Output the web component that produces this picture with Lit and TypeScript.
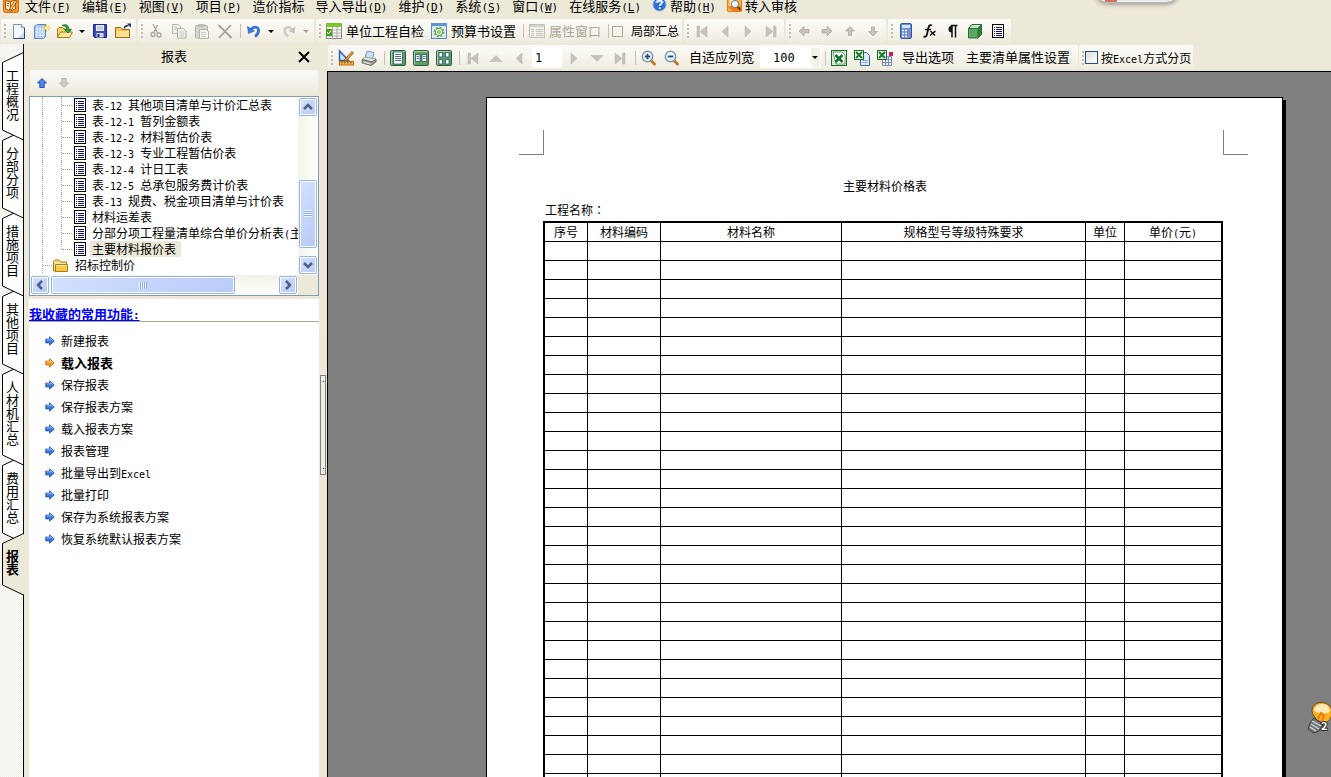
import { LitElement, html, css, svg, nothing } from "lit";
import { customElement, property, state } from "lit/decorators.js";
import { classMap } from "lit/directives/class-map.js";
import { styleMap } from "lit/directives/style-map.js";

/* Latin runs are set in a monospaced face, half as wide as a CJK glyph. */
const mixed = (text: string) =>
  text
    .split(/([\x20-\x7e]+)/)
    .filter((part) => part)
    .map((part) => (/^[\x20-\x7e]/.test(part) ? html`<span class="latin">${part}</span>` : part));

const magnifier = (plus: boolean) => svg`
  <path d="M9.5 10l4 4" stroke="#c77d20" stroke-width="3" stroke-linecap="round"/>
  <circle cx="6.5" cy="6.5" r="5.2" fill="#e3effb" stroke="#8296aa" stroke-width="1.400"/>
  <path d="M3 5.500a3.800 3.800 0 0 1 6.500-1.200" stroke="#fff" fill="none"/>
  <path d="M3.800 6.500h5.400" stroke="#2a4a78" stroke-width="1.800"/>
  ${plus ? svg`<path d="M6.500 3.800v5.400" stroke="#2a4a78" stroke-width="1.800"/>` : nothing}`;

const greenFrame = svg`
  <rect x=".5" y=".5" width="15" height="15" rx="1.500" fill="#5fa05f" stroke="#2b5f33"/>
  <path d="M1.500 14.500V1.500h13" stroke="#a9d8a4" fill="none"/>`;

const excelMark = (x: number, y: number) => svg`
  <rect x=${x + 0.5} y=${y + 0.5} width="9" height="9" fill="#e9f6e6" stroke="#1f6b2c"/>
  <path d=${`M${x + 2} ${y + 2}l6 6M${x + 8} ${y + 2}l-6 6`} stroke="#1c7a2f" stroke-width="2"/>`;

const sheetLines = svg`
  <rect x="2.500" y="1.500" width="11" height="13" fill="#fff" stroke="#000"/>
  <path d="M4 4h1M6 4h6M4 6h1M6 6h6M4 8h1M6 8h6M4 10h1M6 10h6M4 12h1M6 12h6" stroke="#0b0b8c" transform="translate(0 .5)"/>`;

const arrowRight = (fill: string, edge: string, light: string) => svg`
  <path d="M2.500 5.500h5v-3l6 5.500-6 5.500v-3h-5z" fill=${fill} stroke=${edge} stroke-width="1"/>
  <path d="M3.500 6.500h5v-2l3 3" stroke=${light} fill="none"/>`;

const grey = "#c6c4ba";

const ICONS: Record<string, unknown> = {
  app: svg`
    <rect x=".5" y=".5" width="15" height="15" rx="2" fill="#f39a21" stroke="#d56a10"/>
    <path d="M2.500 3.500l5 1.500 5-2.500v9.500l-5 2-5-2z" fill="#fff5dc" stroke="#b5520b"/>
    <path d="M7.500 5v8M3.800 6l2.400.700M3.800 8.500l2.400.700" stroke="#b5520b"/>
    <path d="M7 11l5-8 2 1.200-5 8-2.500 1z" fill="#fbd15a" stroke="#8b3f06" stroke-width=".8"/>`,
  help: svg`
    <circle cx="8" cy="8" r="7" fill="#2e6fd6" stroke="#9dbbe8"/>
    <path d="M3 6a5.500 5.500 0 0 1 10 0z" fill="#8fb9f4"/>
    <path d="M5.500 6.200c0-3.400 5-3.200 5-.400 0 1.800-2.300 1.800-2.300 3.700M8.200 11v1.800" stroke="#fff" stroke-width="1.800" fill="none"/>`,
  review: svg`
    <rect x=".5" y=".5" width="15" height="15" rx="1" fill="#f7b04a" stroke="#e0780f"/>
    <path d="M1 10l5 5h9V9z" fill="#f07d1a"/>
    <path d="M3 3h5v6H3z" fill="#fff3d8"/>
    <circle cx="8.500" cy="7.500" r="3.800" fill="#eef4f8" stroke="#8d8678" stroke-width="1.200"/>
    <path d="M11.300 10.500l3 3.200" stroke="#7b3b08" stroke-width="2"/>`,
  blank: svg`
    <path d="M2.500 1.500h8l3 3v11h-11z" fill="#f4f9ff" stroke="#7c92b4"/>
    <path d="M7 15l6-6v6z" fill="#c5d9f1"/>
    <path d="M13.500 5v10.500h-11" stroke="#2f4870" fill="none"/>
    <path d="M10.500 1.500v3h3" fill="#fff" stroke="#7c92b4"/>`,
  gridnew: svg`
    <path d="M.5 3.500l3-2h8v12l-2 2h-9z" fill="#9fc0ea" stroke="#5c86bf"/>
    <path d="M3 3v12M6 3v12M9 3v12M1 6h10M1 9h10M1 12h10" stroke="#e8f2ff"/>
    <path d="M12.500 1v8M8.500 5h8M9.800 2.200l5.400 5.400M15.200 2.200L9.800 7.600" stroke="#f2c234"/>
    <circle cx="12.500" cy="5" r="1.800" fill="#fff2a0"/>`,
  open: svg`
    <path d="M.5 14.500V6l1.500-1.500h3.500L7 6h5v3" fill="#f6d673" stroke="#a87c17"/>
    <path d="M.5 14.500L3.500 9h12l-3 5.500z" fill="#fce79a" stroke="#a87c17"/>
    <path d="M5 2.500c4-2 7 0 7 4h2.500L11 10 7.500 6.500H10c0-2-1.500-3.500-5-4z" fill="#35a83a" stroke="#14701d" stroke-width=".8"/>`,
  save: svg`
    <path d="M1.500 1.500h13v13h-12l-1-1z" fill="#3b49ba" stroke="#1e2780"/>
    <path d="M4 2h8v6H4z" fill="#eef2fb"/><path d="M5 4h6M5 6h6" stroke="#9aa6d8"/>
    <path d="M4.500 10h7v4.500h-7z" fill="#d8dcf0"/><path d="M5.500 11h2v3h-2z" fill="#1e2780"/>`,
  folderout: svg`
    <path d="M.5 14.500v-10h5l1.500 2h7.500v8z" fill="#f5c555" stroke="#99691a"/>
    <path d="M1.500 8h12.500v6H1.500z" fill="#fbdf8e"/>
    <path d="M9.500 5.500c0-2 1.500-3 4-3" stroke="#1d2d52" stroke-width="1.500" fill="none"/>
    <path d="M12 .5h4v4z" fill="#1d2d52"/>`,
  cut: svg`
    <path d="M5 1l4.500 9M9.500 2L6 9" stroke="#a9a79d" stroke-width="1.300"/>
    <circle cx="5" cy="11.500" r="2" fill="none" stroke="#a9a79d" stroke-width="1.300"/>
    <circle cx="11" cy="12" r="2" fill="none" stroke="#a9a79d" stroke-width="1.300"/>`,
  copy: svg`
    <path d="M1.500 1.500h6l2 2v7h-8z" fill="#efeee8" stroke="#bcbab0"/>
    <path d="M6.500 5.500h6l2.500 2.500v7H6.500z" fill="#f4f3ee" stroke="#b4b2a8"/>
    <path d="M8.500 9h4M8.500 11h5M8.500 13h5M3 4h3M3 6h3" stroke="#cbc9c0"/>`,
  paste: svg`
    <rect x="1.500" y="2.500" width="12" height="12.500" rx="1" fill="#d8d6cc" stroke="#b4b2a8"/>
    <path d="M4.500 1h6v3h-6z" fill="#c1bfb4"/>
    <path d="M5.500 6.500h7l2 2v7h-9z" fill="#f4f3ee" stroke="#b4b2a8"/>
    <path d="M7 9.500h5M7 11.500h5M7 13.500h5" stroke="#cbc9c0"/>`,
  del: svg`<path d="M1.500 2l13 13M14 2L2 15" stroke="#a5a399" stroke-width="1.800"/>`,
  undo: svg`
    <path d="M5 6.500C8 2.500 13 4 12.500 8c-.2 3-2 4.500-3.500 5.500" stroke="#3570d8" stroke-width="2.800" fill="none"/>
    <path d="M1.500 3.500l1 7 6-2.500z" fill="#3f7ce0" stroke="#285bb8" stroke-width=".6"/>`,
  redo: svg`
    <path d="M11 6.500C8 2.500 3.500 4 3.700 8c.2 3 2 4.500 3.500 5.500" stroke="#d0cec5" stroke-width="2.800" fill="none"/>
    <path d="M14.500 3.500l-1 7-6-2.500z" fill=${grey}/>`,
  check: svg`
    <rect x=".5" y=".5" width="15" height="15" fill="#fff" stroke="#8c8c86"/>
    <path d="M0 0h16v4H0z" fill="#7cc62c"/>
    <path d="M1 7h14M1 10h14M1 13h14M6.500 4v11M11 4v11" stroke="#a9a9a3"/>
    <path d="M0 6h6v7H0z" fill="#4b9a1c"/><path d="M1 9l1.500 2L5 7.500" stroke="#fff" fill="none"/>`,
  gear: svg`
    <rect x=".5" y=".5" width="15" height="15" fill="#dcebf8" stroke="#5c86b4"/>
    <path d="M0 0h16v3H0z" fill="#5f93cf"/>
    <circle cx="8" cy="9" r="4.600" fill="#e6f3dc" stroke="#5fa743" stroke-width="1.500" stroke-dasharray="2 1.600"/>
    <circle cx="8" cy="9" r="3.600" fill="#f2f9ec" stroke="#5fa743"/>
    <circle cx="8" cy="9" r="1.300" fill="#fff" stroke="#5fa743"/>`,
  props: svg`
    <rect x=".5" y="1.500" width="15" height="13" fill="#f4f2ea" stroke="#c2c0b5"/>
    <path d="M1 2h14v2H1z" fill="#d5d3c9"/>
    <path d="M2 6.500h3M2 8.500h3M2 10.500h3M2 12.500h3M7 6.500h7M7 8.500h7M7 10.500h7M7 12.500h7" stroke="#c2c0b5"/>`,
  first: svg`<path d="M3 3h2.500v11H3zM13 3v11L6 8.500z" fill=${grey} stroke="#b5b3a8" stroke-width=".5"/>`,
  last: svg`<path d="M10.500 3H13v11h-2.500zM3 3v11l7-5.500z" fill=${grey} stroke="#b5b3a8" stroke-width=".5"/>`,
  prev: svg`<path d="M11 3v11L5 8.500z" fill=${grey} stroke="#b5b3a8" stroke-width=".5"/>`,
  next: svg`<path d="M5 3v11l6-5.500z" fill=${grey} stroke="#b5b3a8" stroke-width=".5"/>`,
  tup: svg`<path d="M2 11.500h12L8 5.500z" fill=${grey} stroke="#b5b3a8" stroke-width=".5"/>`,
  tdown: svg`<path d="M2 5.500h12l-6 6z" fill=${grey} stroke="#b5b3a8" stroke-width=".5"/>`,
  aleft: svg`<path d="M3 8l5-4.500v3h5v3.500H8v3z" fill=${grey} stroke="#aeaca2" stroke-width=".8"/>`,
  aright: svg`<path d="M13 8L8 3.500v3H3v3.500h5v3z" fill=${grey} stroke="#aeaca2" stroke-width=".8"/>`,
  aup: svg`<path d="M8 3.500L3.500 8h3v4.500h3V8h3z" fill=${grey} stroke="#aeaca2" stroke-width=".8"/>`,
  adown: svg`<path d="M8 13L3.500 8.500h3V4h3v4.500h3z" fill=${grey} stroke="#aeaca2" stroke-width=".8"/>`,
  calc: svg`
    <rect x="2.500" y=".5" width="11" height="15" rx="1.500" fill="#5d8fe0" stroke="#31589f"/>
    <path d="M4 2h8v3H4z" fill="#d6e6ff"/>
    <path d="M4 7.500h2M7 7.500h2M4 10.500h2M7 10.500h2M4 13.500h2M7 13.500h2" stroke="#fff" stroke-width="1.600"/>
    <path d="M10 7.500h2M10 10.500h2M10 13.500h2" stroke="#f0707a" stroke-width="1.600"/>`,
  fx: svg`
    <path d="M11 2.500c-3-1.500-3.500 1.500-4.200 5-.7 4-1.300 7.500-4.300 6" stroke="#111" stroke-width="1.900" fill="none"/>
    <path d="M4 6.500h6" stroke="#111" stroke-width="1.500"/>
    <path d="M9.500 8l4.500 4.500M14.500 8l-5.500 4.500" stroke="#111" stroke-width="1.500"/>`,
  para: svg`
    <path d="M8 2.500a3.500 3.500 0 0 0 0 7z" fill="#111"/>
    <path d="M7 2.500h6.500M8 2.500v12M11.500 2.500v12" stroke="#111" stroke-width="1.500"/>`,
  cube: svg`
    <path d="M1.500 5.500l3.500-4h9.500v9.500l-3.500 4H1.500z" fill="#5aa863" stroke="#2f6b3a"/>
    <path d="M1.500 5.500l3.500-4h9.500l-3.500 4z" fill="#bfe6bf" stroke="#2f6b3a"/>
    <path d="M11 5.500V15l3.500-4V1.500z" fill="#2f7f40" stroke="#2f6b3a"/>`,
  sheet: sheetLines,
  design: svg`
    <path d="M1.500 1v9.500h9z" fill="#cfe2f8" stroke="#2f62b5" stroke-width="1.500"/>
    <rect x="1.500" y="11.500" width="14" height="3.500" fill="#f8b64a" stroke="#b96a12"/>
    <path d="M4 12v1.500M7 12v1.500M10 12v1.500M13 12v1.500" stroke="#7a4208"/>
    <path d="M7 9l7-7.500 1.500 1.500-7 7.500-2 .5z" fill="#e9a53c" stroke="#7a4a12" stroke-width=".8"/>`,
  printer: svg`
    <path d="M4 8l2-7 7 1.500-1.500 6z" fill="#cfe0fb" stroke="#7b95bd"/>
    <path d="M1 9.500L4.500 7l10.500 2-3 3z" fill="#e4e4e1" stroke="#8a8a82" stroke-width=".8"/>
    <path d="M1 9.500v3.500l9 2.500 5-3.500V9l-4 3z" fill="#9b9b97" stroke="#62625c" stroke-width=".8"/>
    <path d="M2.500 12l7 2" stroke="#f2f2f2"/>`,
  page1: svg`${greenFrame}<rect x="3.500" y="2" width="9" height="12" fill="#fff" stroke="#234f86" stroke-width=".8"/><path d="M5 4.500h6M5 6.500h6M5 8.500h6M5 10.500h6" stroke="#4a6f9f"/>`,
  page2: svg`${greenFrame}<path d="M2.500 4.500h4.500v7H2.500zM9 4.500h4.500v7H9z" fill="#fff" stroke="#234f86" stroke-width=".8"/><path d="M3.500 6.500h2.500M3.500 8.500h2.500M10 6.500h2.500M10 8.500h2.500" stroke="#4a6f9f"/>`,
  page4: svg`${greenFrame}<path d="M3 2.500h3.500V7H3zM9.500 2.500H13V7H9.500zM3 9.500h3.500V14H3zM9.500 9.500H13V14H9.500z" fill="#fff" stroke="#234f86" stroke-width=".8"/>`,
  zoomin: magnifier(true),
  zoomout: magnifier(false),
  excel: svg`
    <rect x=".5" y=".5" width="15" height="15" fill="#d9efd4" stroke="#1f6b2c"/>
    <path d="M2 2h9l3 3v9H5z" fill="#fff" stroke="#3b8c47" stroke-width=".8"/>
    <path d="M4.500 5l7 7M11.500 5l-7 7" stroke="#17722a" stroke-width="2.500"/>`,
  excelpage: svg`
    <path d="M6.500 2.500h6l3 3v10h-9z" fill="#dce9fb" stroke="#3f66a8"/>
    <path d="M8.500 10.500h5M8.500 12.500h5" stroke="#8aa8d6"/>${excelMark(0, 0)}`,
  excelgrid: svg`
    <path d="M5.500 6.500h9v9h-9zM5.500 9.500h9M5.500 12.500h9M8.500 6.500v9M11.500 6.500v9" fill="#f2f5fb" stroke="#7a8cb4"/>
    ${excelMark(0, 0)}<rect x="12" y="2" width="4" height="4" fill="#d0127a"/>`,
  up: svg`<path d="M8 3.500L3.500 8h2.300v4.500h4.400V8h2.300z" fill="#4f86ea" stroke="#2350b0"/>`,
  down: svg`<path d="M8 12.500L3.500 8h2.300V3.500h4.400V8h2.300z" fill="#cfcdc5" stroke="#b9b7ad"/>`,
  folder: svg`
    <path d="M.5 14V4.500L2 3h4l1.500 2h6V14z" fill="#fbe08c" stroke="#a87c17"/>
    <path d="M2.500 14.500V7.500h12v7z" fill="#fcc840" stroke="#a87c17"/><path d="M3.500 8.500H13.500" stroke="#fff2b8"/>`,
  blue: arrowRight("#3f78dc", "#2450a0", "#a8c8fb"),
  orange: arrowRight("#f29a2a", "#b8610c", "#ffd9a0"),
};

const icon = (name: string, size = 18) =>
  html`<svg class="icon" width=${size} height=${size} viewBox="-1 -1 18 18" aria-hidden="true" fill="none">${ICONS[name]}</svg>`;

type Tool = { i?: string; t?: string; title?: string; kind?: "sep" | "drop"; off?: boolean };
const tool = (i: string, title: string, off = false): Tool => ({ i, title, off });
const SEP: Tool = { kind: "sep" };

const shared = css`
  * { box-sizing: border-box; }
  button { border: 0; padding: 0; margin: 0; background: none; font: inherit; line-height: inherit; color: inherit; cursor: default; }
  .latin { font-family: "DejaVu Sans Mono", monospace; font-size: 10px; line-height: 10px; white-space: pre; }
  .icon { display: block; flex: none; }
`;

@customElement("tool-group")
class ToolGroup extends LitElement {
  @property({ attribute: false }) tools: Tool[] = [];

  static styles = [
    shared,
    css`
      :host {
        display: flex; align-items: center; flex: none; height: 100%; padding-right: 2px; border-radius: 2px;
        background: linear-gradient(#fbfaf7, #f6f4ec 50%, #eeebde);
      }
      .grip {
        width: 2px; height: 14px; margin: 0 1px 0 3px;
        background: repeating-linear-gradient(#c1beb0 0 2px, transparent 2px 4px);
      }
      .btn { display: flex; align-items: center; justify-content: center; width: 23px; height: 22px; }
      .label { display: flex; align-items: center; gap: 3px; padding: 0 3px; height: 22px; font-size: 13px; white-space: nowrap; }
      .label span { padding-bottom: 2px; }
      .plain { padding: 0 6px; }
      .off { color: #aca899; }
      .drop { display: flex; justify-content: center; width: 12px; }
      .drop::before { content: ""; border: 3px solid transparent; border-top-color: #000; border-bottom: 0; }
      .drop.off::before { border-top-color: #aca899; }
      .sep { width: 1px; height: 14px; margin: 0 1px 0 4px; background: #c5c2b8; }
    `,
  ];

  render() {
    return html`<span class="grip"></span>${this.tools.map((t) => {
        if (t.kind === "sep") return html`<span class="sep"></span>`;
        if (t.kind === "drop")
          return html`<button class=${classMap({ drop: true, off: !!t.off })} aria-label=${t.title ?? "更多"}></button>`;
        if (t.t)
          return html`<button class=${classMap({ label: true, plain: !t.i, off: !!t.off })} ?disabled=${t.off}>
            ${t.i ? icon(t.i) : nothing}<span>${t.t}</span>
          </button>`;
        if (t.i) return html`<button class="btn" aria-label=${t.title ?? ""} ?disabled=${t.off}>${icon(t.i)}</button>`;
        return html`<slot name=${t.title ?? ""}></slot>`;
      })}<slot></slot>`;
  }
}

@customElement("side-tabs")
class SideTabs extends LitElement {
  @state() private active = 6;
  private names = ["工程概况", "分部分项", "措施项目", "其他项目", "人材机汇总", "费用汇总", "报表"];

  static styles = [
    shared,
    css`
      :host {
        display: flex; flex-direction: column; flex: none; width: 24px; padding-top: 18px; border-right: 1px solid #000;
        background: repeating-conic-gradient(#fff 0 25%, #f0eee2 0 50%) 0 0 / 2px 2px;
      }
      .tab { position: relative; display: block; width: 22px; margin-left: 2px; text-align: left; }
      .shape { position: absolute; left: 0; top: -10px; overflow: visible; }
      .name { position: relative; display: block; width: 13px; margin-left: 4px; padding: 6px 0 20px; font-size: 13px; line-height: 13px; word-break: break-all; }
      .on .name { font-weight: bold; }
    `,
  ];

  render() {
    return this.names.map((name, n) => {
      const h = name.length * 13 + 26;
      const on = n === this.active;
      return html`<button
        class=${classMap({ tab: true, on })}
        style=${styleMap({ zIndex: String(on ? 20 : 10 - n) })}
        aria-pressed=${on}
        @click=${() => (this.active = n)}
      >
        <svg class="shape" width="23" height=${h + 11} aria-hidden="true">
          <path d=${`M21.500 .5L.5 10.500V${h}L21.500 ${h + 10}${on ? "" : "Z"}`} fill=${on ? "#ece9d8" : "#fff"} stroke="#000" />
          ${on ? svg`<path d=${`M21.500 1.500V${h + 9}`} stroke="#ece9d8" stroke-width="3"/>` : nothing}
        </svg>
        <span class="name">${name}</span>
      </button>`;
    });
  }
}

@customElement("report-panel")
class ReportPanel extends LitElement {
  @state() private picked = 9;
  private reports = [
    "表-12 其他项目清单与计价汇总表",
    "表-12-1 暂列金额表",
    "表-12-2 材料暂估价表",
    "表-12-3 专业工程暂估价表",
    "表-12-4 计日工表",
    "表-12-5 总承包服务费计价表",
    "表-13 规费、税金项目清单与计价表",
    "材料运差表",
    "分部分项工程量清单综合单价分析表(主",
    "主要材料报价表",
  ];
  private favourites = [
    "新建报表", "载入报表", "保存报表", "保存报表方案", "载入报表方案",
    "报表管理", "批量导出到Excel", "批量打印", "保存为系统报表方案", "恢复系统默认报表方案",
  ];

  static styles = [
    shared,
    css`
      :host { display: flex; flex: none; width: 303px; padding-left: 5px; background: #ece9d8; font-size: 12px; }
      .main { display: flex; flex-direction: column; width: 290px; }
      .head { display: flex; align-items: center; height: 26px; padding: 0 8px 0 22px; font-size: 13px; }
      .head h2 { flex: 1; margin: 0; padding-bottom: 4px; text-align: center; font-size: 13px; font-weight: normal; }
      .arrows { display: flex; align-items: center; height: 26px; padding-left: 2px; gap: 2px; margin: 0 1px; border-radius: 2px; background: linear-gradient(#fbfaf7, #f3f1e8 60%, #ece9d8); }
      .arrows button { width: 20px; display: flex; justify-content: center; }
      .box { display: grid; grid-template: 178px 20px / 1fr 20px; border: 1px solid #7f9db9; background: #fff; }
      .tree { margin: 0; padding: 0; list-style: none; overflow: hidden; white-space: nowrap; }
      .row { display: flex; align-items: center; height: 16px; line-height: 16px; }
      .row svg { flex: none; }
      .g1 { align-self: stretch; flex: none; width: 19px; margin-left: 12px; border-left: 1px dotted #aca899; }
      .g2 { align-self: flex-start; flex: none; width: 11px; height: 16px; margin-right: 1px; border-left: 1px dotted #aca899; }
      .g2::after { content: ""; display: block; height: 8px; border-bottom: 1px dotted #aca899; }
      .g2.end { height: 8px; }
      .stem { flex: none; width: 10px; margin-left: 12px; height: 16px; border-left: 1px dotted #aca899; }
      .stem::after { content: ""; display: block; height: 8px; border-bottom: 1px dotted #aca899; }
      .pick { flex: none; height: 16px; margin-left: 3px; padding: 0 5px 0 2px; }
      .pick.on { background: #ece9d8; }
      .scroll { display: flex; padding: 1px; background: linear-gradient(90deg, #f3f3ec, #fefefb); }
      .scroll.v { flex-direction: column; }
      .scroll.h { background: linear-gradient(#f3f3ec, #fefefb); }
      .arrow, .thumb { display: flex; align-items: center; justify-content: center; border: 1px solid #98b4ea; border-radius: 2px; background: linear-gradient(135deg, #d3e0ff, #b8cbf8); box-shadow: inset 0 0 0 1px #fff; }
      .arrow { flex: none; width: 18px; height: 18px; }
      .gap, .thumb { flex-basis: 0; min-height: 0; min-width: 0; }
      .thumb.tall { width: 18px; }
      .thumb.wide { height: 18px; }
      .ridges { width: 8px; height: 7px; background: repeating-linear-gradient(#eef4ff 0 1px, #8cb0f8 1px 2px); }
      .wide .ridges { background: repeating-linear-gradient(90deg, #eef4ff 0 1px, #8cb0f8 1px 2px); }
      .corner { background: #ece9d8; }
      .fav { flex: 1; margin-top: 3px; padding-top: 6px; background: #fff; }
      .title { display: block; height: 17px; line-height: 17px; border-bottom: 1px solid #aca899; color: #00f; font-size: 13px; font-weight: bold; text-decoration: underline; }
      .title .latin { font-size: 11px; }
      .list { margin: 0; padding: 8px 0 0 14px; list-style: none; }
      .item { display: flex; align-items: center; gap: 4px; height: 22px; color: #000; text-decoration: none; }
      .item span { padding-bottom: 1px; }
      .item .latin { padding: 0; }
      .item.hot { font-size: 13px; font-weight: bold; }
      .split { align-self: flex-start; display: flex; flex-direction: column; justify-content: space-between; width: 6px; height: 100px; margin: 331px 0 0 1px; padding: 5px 0 5px 2px; border: 1px solid #808080; background: #f1efe4; }
      .split i { width: 1px; height: 1px; background: #003; }
    `,
  ];

  private arrow(d: string, label: string) {
    return html`<button class="arrow" aria-label=${label}>
      <svg width="10" height="10" viewBox="0 0 10 10" fill="none" aria-hidden="true"><path d=${d} stroke="#4d6185" stroke-width="2.500" /></svg>
    </button>`;
  }

  render() {
    const grow = (n: number) => styleMap({ flexGrow: String(n) });
    return html`
      <div class="main">
        <div class="head">
          <h2>报表</h2>
          <button aria-label="关闭">
            <svg class="icon" width="14" height="14" viewBox="0 0 14 14" aria-hidden="true"><path d="M2 2l10 10M12 2L2 12" stroke="#000" stroke-width="2" /></svg>
          </button>
        </div>
        <div class="arrows">
          <button aria-label="上移">${icon("up")}</button>
          <button aria-label="下移" disabled>${icon("down")}</button>
        </div>
        <div class="box">
          <ul class="tree">
            ${this.reports.map(
              (name, n) => html`<li class="row">
                <span class="g1"></span><span class=${classMap({ g2: true, end: n === this.reports.length - 1 })}></span>
                <svg width="14" height="16" viewBox="1 0 14 16" fill="none" aria-hidden="true">${sheetLines}</svg>
                <button class=${classMap({ pick: true, on: n === this.picked })} @click=${() => (this.picked = n)}>${mixed(name)}</button>
              </li>`,
            )}
            <li class="row"><span class="stem"></span>${icon("folder")}<button class="pick">招标控制价</button></li>
          </ul>
          <div class="scroll v">
            ${this.arrow("M1 7l4-4 4 4", "向上滚动")}
            <span class="gap" style=${grow(65)}></span>
            <span class="thumb tall" style=${grow(68)}><span class="ridges"></span></span>
            <span class="gap" style=${grow(8)}></span>
            ${this.arrow("M1 3l4 4 4-4", "向下滚动")}
          </div>
          <div class="scroll h">
            ${this.arrow("M7 1L3 5l4 4", "向左滚动")}
            <span class="gap" style=${grow(2)}></span>
            <span class="thumb wide" style=${grow(184)}><span class="ridges"></span></span>
            <span class="gap" style=${grow(45)}></span>
            ${this.arrow("M3 1l4 4-4 4", "向右滚动")}
          </div>
          <span class="corner"></span>
        </div>
        <div class="fav">
          <a class="title" href="#fav">${mixed("我收藏的常用功能:")}</a>
          <ul class="list">
            ${this.favourites.map(
              (name, n) => html`<li>
                <a class=${classMap({ item: true, hot: n === 1 })} href="#fav">${icon(n === 1 ? "orange" : "blue", 14)}<span>${mixed(name)}</span></a>
              </li>`,
            )}
          </ul>
        </div>
      </div>
      <div class="split"><i></i><i></i></div>
    `;
  }
}

@customElement("report-page")
class ReportPage extends LitElement {
  static styles = [
    shared,
    css`
      :host { display: block; flex: 1; min-height: 0; overflow: hidden; padding: 25px 48px 0 158px; border: solid #000; border-width: 1px 0 0 1px; background: #808080; font-size: 12px; }
      .paper { padding: 32px 34px 40px 32px; border: 1px solid #000; background: #fff; box-shadow: 3px 3px 0 #000; }
      .marks { display: flex; justify-content: space-between; }
      .mark { width: 25px; height: 25px; border: solid #808080; border-width: 0 1px 1px 0; }
      .mark.r { border-width: 0 0 1px 1px; }
      .sheet { margin: 0 25px 0 24px; }
      h1 { margin: 22px 0 6px; padding-left: 4px; text-align: center; font-size: 12px; line-height: 18px; font-weight: normal; }
      .project { margin: 0 0 2px; padding-left: 2px; line-height: 18px; }
      .colon { font-family: "Noto Sans CJK TC", sans-serif; line-height: 12px; }
      table { width: 100%; table-layout: fixed; border: 2px solid #000; border-bottom: 0; border-spacing: 0; }
      th, td { height: 19px; padding: 0; border: solid #000; border-width: 0 1px 1px 0; font-weight: normal; line-height: 16px; }
      th:last-child, td:last-child { border-right: 0; }
      .c1 { width: 43px; } .c2 { width: 73px; } .c3 { width: 181px; } .c5 { width: 39px; } .c6 { width: 96px; }
    `,
  ];

  render() {
    const heads = ["序号", "材料编码", "材料名称", "规格型号等级特殊要求", "单位", "单价(元)"];
    return html`<div class="paper">
      <div class="marks"><span class="mark"></span><span class="mark r"></span></div>
      <div class="sheet">
        <h1>主要材料价格表</h1>
        <p class="project">工程名称<span class="colon" lang="zh-Hant">：</span></p>
        <table>
          <thead>
            <tr>${heads.map((head, n) => html`<th class=${`c${n + 1}`} scope="col">${mixed(head)}</th>`)}</tr>
          </thead>
          <tbody>
            ${Array.from({ length: 36 }, () => html`<tr>${heads.map(() => html`<td></td>`)}</tr>`)}
          </tbody>
        </table>
      </div>
    </div>`;
  }
}

@customElement("app-root")
class AppRoot extends LitElement {
  private menus: { name: string; key?: string; i?: string }[] = [
    { name: "文件", key: "F" }, { name: "编辑", key: "E" }, { name: "视图", key: "V" }, { name: "项目", key: "P" },
    { name: "造价指标" }, { name: "导入导出", key: "D" }, { name: "维护", key: "D" }, { name: "系统", key: "S" },
    { name: "窗口", key: "W" }, { name: "在线服务", key: "L" }, { name: "帮助", key: "H", i: "help" }, { name: "转入审核", i: "review" },
  ];

  static styles = [
    shared,
    css`
      :host { display: flex; flex-direction: column; height: 100vh; overflow: hidden; position: relative; background: #ece9d8; color: #000; font-family: "Noto Sans CJK SC", "Liberation Sans", sans-serif; font-size: 12px; }
      .menu { display: flex; align-items: flex-start; flex: none; height: 18px; gap: 11px; padding-left: 2px; font-size: 13px; line-height: 12px; white-space: nowrap; }
      .menu .icon { margin-top: -4px; }
      .menu > .icon { margin-right: -6px; }
      .entry { display: flex; align-items: flex-start; gap: 2px; }
      .entry .icon { margin-left: -1px; }
      .entry .latin { font-size: 11px; }
      .bars { display: flex; flex: none; gap: 2px; height: 24px; margin: 1px 0 1px 1px; }
      .body { display: flex; flex: 1; min-height: 0; }
      .work { display: flex; flex-direction: column; flex: 1; min-width: 0; }
      .work .bars { height: 25px; gap: 1px; }
      .partial { display: flex; align-items: center; gap: 8px; padding: 0 1px 0 2px; white-space: nowrap; }
      .partial span { padding-bottom: 2px; }
      .partial input { appearance: none; width: 11px; height: 11px; margin: 0; border: 1px solid #aca899; }
      .paged { display: flex; align-items: center; gap: 3px; white-space: nowrap; }
      .paged input { appearance: none; width: 13px; height: 13px; margin: 0; border: 1px solid #1c5180; background: linear-gradient(135deg, #dcdcd7, #fff); }
      .num { width: 30px; height: 21px; margin-left: 2px; padding: 0 3px; border: 0; background: #fff; font: 12px "DejaVu Sans Mono", monospace; }
      .zoom { position: relative; display: flex; }
      .zoom select { appearance: none; width: 61px; height: 21px; padding: 0 12px; border: 1px solid #fff; border-radius: 0; background: linear-gradient(90deg, #fff 50px, #f3f1e8 50px); color: #000; font: 12px "DejaVu Sans Mono", monospace; }
      .zoom::after { content: ""; position: absolute; right: 3px; top: 9px; border: 3px solid transparent; border-top-color: #000; border-bottom: 0; pointer-events: none; }
      .pill { position: absolute; top: -26px; right: 151px; width: 86px; height: 29px; border-radius: 14px; border: 1px solid #b9b9b9; background: #ececec; box-shadow: 0 1px 5px #0006; overflow: hidden; }
      .pill::after { content: ""; position: absolute; left: 10px; bottom: 0; width: 12px; height: 2px; background: #d8705c; }
      .bulb { position: absolute; right: -4px; bottom: 42px; }
    `,
  ];

  render() {
    const front: Tool[] = [
      tool("design", "设计"), tool("printer", "打印"), SEP, tool("page1", "单页"), tool("page2", "双页"), tool("page4", "四页"), SEP,
      tool("first", "首页", true), tool("tup", "上一张", true), tool("prev", "上一页", true), { title: "page" },
      tool("next", "下一页", true), tool("tdown", "下一张", true), tool("last", "末页", true), SEP,
      tool("zoomin", "放大"), tool("zoomout", "缩小"), { t: "自适应列宽" }, { title: "zoom" }, SEP,
      tool("excel", "导出Excel"), tool("excelpage", "导出当前页"), tool("excelgrid", "导出表格"), { t: "导出选项" }, { t: "主要清单属性设置" },
    ];
    return html`
      <nav class="menu">
        ${icon("app")}
        ${this.menus.map(
          (m) => html`<button class="entry">
            ${m.i ? icon(m.i, 17) : nothing}<span>${m.name}${m.key ? html`<span class="latin">(<u>${m.key}</u>)</span>` : nothing}</span>
          </button>`,
        )}
      </nav>
      <div class="bars">
        <tool-group .tools=${[tool("blank", "新建"), tool("gridnew", "新建工程"), tool("open", "打开"), { kind: "drop" }, tool("save", "保存"), tool("folderout", "另存为")] as Tool[]}></tool-group>
        <tool-group .tools=${[tool("cut", "剪切", true), tool("copy", "复制", true), tool("paste", "粘贴", true), tool("del", "删除", true), SEP, tool("undo", "撤销"), { kind: "drop" }, tool("redo", "重做", true), { kind: "drop", off: true }] as Tool[]}></tool-group>
        <tool-group .tools=${[{ i: "check", t: "单位工程自检" }, { i: "gear", t: "预算书设置" }, SEP, { i: "props", t: "属性窗口", off: true }, SEP] as Tool[]}>
          <label class="partial"><input type="checkbox" /><span>局部汇总</span></label>
        </tool-group>
        <tool-group .tools=${[tool("first", "第一条", true), tool("prev", "上一条", true), tool("next", "下一条", true), tool("last", "最后一条", true)]}></tool-group>
        <tool-group .tools=${[tool("aleft", "左移", true), tool("aright", "右移", true), tool("aup", "上移", true), tool("adown", "下移", true)]}></tool-group>
        <tool-group .tools=${[tool("calc", "计算器"), tool("fx", "函数"), tool("para", "段落"), tool("cube", "图集"), tool("sheet", "清单")]}></tool-group>
      </div>
      <div class="body">
        <side-tabs></side-tabs>
        <report-panel></report-panel>
        <div class="work">
          <div class="bars">
            <tool-group .tools=${front}>
              <input class="num" slot="page" aria-label="页码" value="1" />
              <span class="zoom" slot="zoom"><select aria-label="缩放比例"><option>100</option></select></span>
            </tool-group>
            <tool-group><label class="paged"><input type="checkbox" /><span>${mixed("按Excel方式分页")}</span></label></tool-group>
          </div>
          <report-page></report-page>
        </div>
      </div>
      <span class="pill"></span>
      <svg class="bulb" width="28" height="34" viewBox="0 0 28 34" aria-hidden="true">
        <path d="M14 1.500c7 0 11 4.500 11 10 0 6-4 9-7.500 11l-8-3.500C8 15 5 14 5 10c0-5 4-8.500 9-8.500z" fill="#fbb21c" stroke="#6b4a2a" />
        <path d="M15 3c5 0 8 3 8 7.500-3 3-11 3-16-1C7 5.500 11 3 15 3z" fill="#ffe9b8" />
        <path d="M11 18l3-6 3 2-2 7" stroke="#f07c08" stroke-width="2" fill="none" />
        <path d="M7 17l9 6-4 7-5 2-6-4 2-6z" fill="#77777a" stroke="#3d3d40" />
        <path d="M5 20l9 5M4 23l8 5M3 26l6 4" stroke="#d5d5d8" stroke-width="1.300" />
        <text x="14" y="29" font-size="11" font-weight="bold" fill="#fff" stroke="#333" stroke-width="2" paint-order="stroke">2</text>
      </svg>
    `;
  }
}
